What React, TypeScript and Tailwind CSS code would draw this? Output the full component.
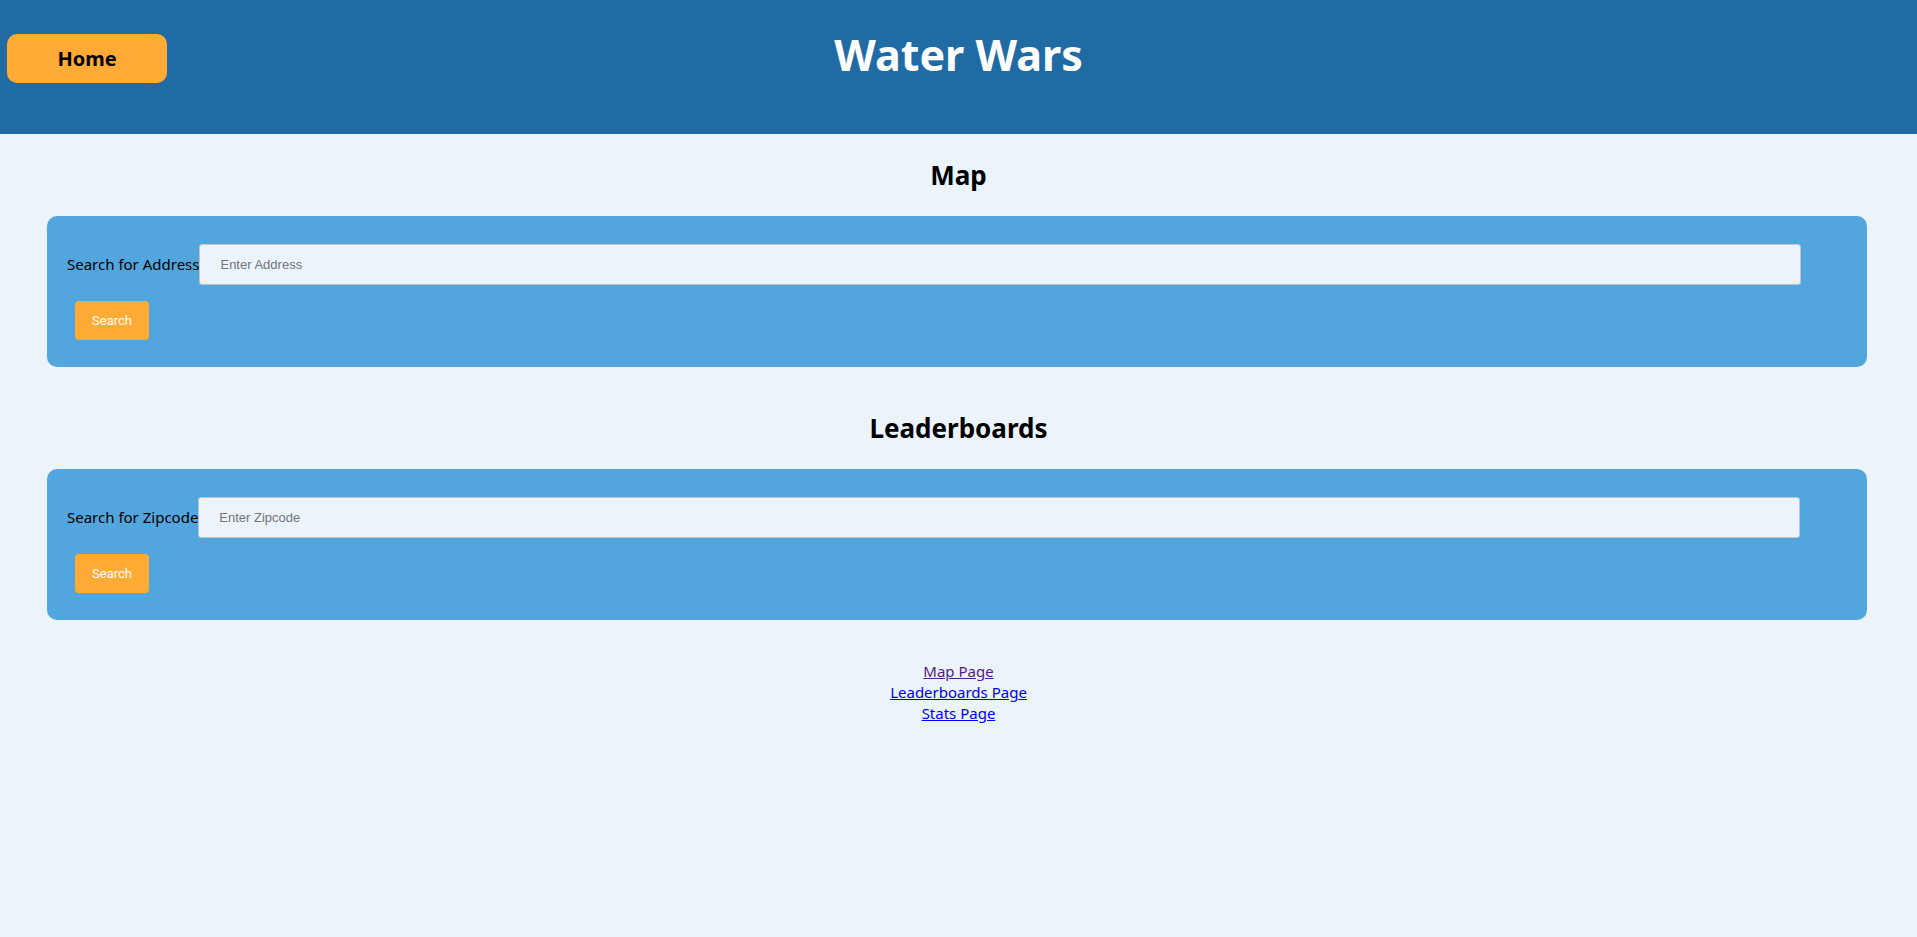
import React from "react";

function SearchCard({ label, placeholder }: { label: string; placeholder: string }) {
  return (
    <div className="ml-[47px] mr-[50px] rounded-[10px] bg-[#53a5dd] pl-[20px] pr-[20px] pt-[28px] pb-[27px]">
      <div className="flex items-center">
        <label className="text-[15px] text-black leading-none whitespace-nowrap" style={{ fontFamily: '"Noto Sans", sans-serif' }}>
          {label}
        </label>
        <input
          type="text"
          placeholder={placeholder}
          className="h-[41px] w-[1602px] rounded-[3px] border border-[#c4c4c4] bg-[#ebf3fb] pl-[20px] text-[13px] text-black placeholder:text-[#757575] outline-none"
          style={{ fontFamily: '"Liberation Sans", Arial, sans-serif' }}
        />
      </div>
      <button
        className="ml-[8px] mt-[16px] h-[39px] w-[74px] rounded-[4px] bg-[#ffab35] text-[13px] font-normal text-white"
        style={{ fontFamily: 'Roboto, "Liberation Sans", sans-serif' }}
      >
        Search
      </button>
    </div>
  );
}

export default function App() {
  return (
    <div className="min-h-[937px] bg-[#ebf3fb]" style={{ fontFamily: '"Noto Sans", sans-serif' }}>
      <header className="relative h-[134px] bg-[#216ba5]">
        <button className="absolute left-[7px] top-[34px] h-[49px] w-[160px] rounded-[10px] bg-[#ffab35] text-[20px] font-bold text-black">
          Home
        </button>
        <h1 className="pt-[25px] text-center text-[43px] font-bold leading-[60px] text-white">Water Wars</h1>
      </header>
      <div>
        <h2 className="mt-[21px] mb-[21px] text-center text-[26px] font-bold leading-[40px] text-black">Map</h2>
        <SearchCard label="Search for Address" placeholder="Enter Address" />
        <h2 className="mt-[41px] mb-[21px] text-center text-[26px] font-bold leading-[40px] text-black">Leaderboards</h2>
        <SearchCard label="Search for Zipcode" placeholder="Enter Zipcode" />
      </div>
      <div className="mt-[41px] flex flex-col items-center text-[15px] leading-[21px]">
        <a href="#" className="text-[#551a8b] underline">Map Page</a>
        <a href="#" className="text-[#0000ee] underline">Leaderboards Page</a>
        <a href="#" className="text-[#0000ee] underline">Stats Page</a>
      </div>
    </div>
  );
}
